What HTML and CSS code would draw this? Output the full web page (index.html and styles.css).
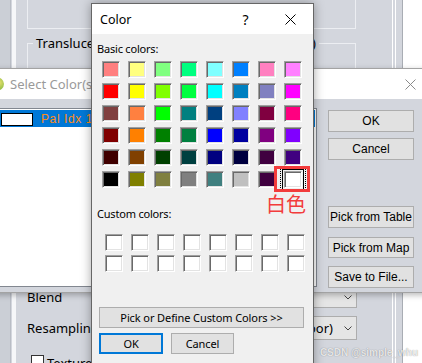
FILE: index.html
```html
<!DOCTYPE html>
<html>
<head>
<meta charset="utf-8">
<link rel="stylesheet" href="styles.css">
</head>
<body>
<div class="bgwin">
  <div class="bg-left"></div>
  <div class="bg-rail"></div>
  <div class="bg-main">
    <div class="gb1"></div>
    <div class="gb2">
      <div class="legend"><span>Translucency of the selected color</span><span>e)</span></div>
    </div>
    <div class="bg-bottom">
      <div class="row row-blend">
        <span class="lbl">Blend</span>
        <div class="combo"><span class="chev"><svg width="8" height="5" viewBox="0 0 8 5"><polyline points="0.5,0.5 4,4 7.5,0.5" fill="none" stroke="#444" stroke-width="1"/></svg></span></div>
      </div>
      <div class="row row-res">
        <span class="lbl">Resampling</span>
        <div class="combo"><span class="ctext">Nearest Neighboor)</span><span class="chev"><svg width="8" height="5" viewBox="0 0 8 5"><polyline points="0.5,0.5 4,4 7.5,0.5" fill="none" stroke="#444" stroke-width="1"/></svg></span></div>
      </div>
      <div class="row row-chk">
        <span class="chk"></span><span class="lbl">Texture Mode</span>
      </div>
    </div>
  </div>
  <div class="bg-right">
    <div class="rail2"></div>
    <div class="gap2"></div>
    <div class="edge"></div>
  </div>
</div>

<div class="selwin">
  <div class="sel-title">
    <span class="appicon"></span>
    <span class="sel-caption">Select Color(s)</span>
    <span class="sel-close"><svg width="11" height="11" viewBox="0 0 11 11"><path d="M0.5 0.5 L10.5 10.5 M10.5 0.5 L0.5 10.5" stroke="#8a8a8a" stroke-width="1"/></svg></span>
  </div>
  <div class="sel-body">
    <div class="list">
      <div class="list-row"><span class="lswatch"></span><span class="ltext">Pal Idx 1 - White</span></div>
    </div>
    <div class="sel-buttons">
      <div class="wbtn b-ok">OK</div>
      <div class="wbtn b-cancel">Cancel</div>
      <div class="wbtn b-table">Pick from Table</div>
      <div class="wbtn b-map">Pick from Map</div>
      <div class="wbtn b-save">Save to File...</div>
    </div>
  </div>
</div>

<div class="colorwin">
  <div class="cw-title">
    <span class="cw-caption">Color</span>
    <span class="cw-help">?</span>
    <span class="cw-close"><svg width="11" height="11" viewBox="0 0 11 11"><path d="M0.5 0.5 L10.5 10.5 M10.5 0.5 L0.5 10.5" stroke="#000" stroke-width="1"/></svg></span>
  </div>
  <div class="cw-body">
    <div class="cw-label lbl-basic">Basic colors:</div>
    <div class="grid basic">
      <div class="cell" style="background:#ff8080"></div>
      <div class="cell" style="background:#ffff80"></div>
      <div class="cell" style="background:#80ff80"></div>
      <div class="cell" style="background:#00ff80"></div>
      <div class="cell" style="background:#80ffff"></div>
      <div class="cell" style="background:#0080ff"></div>
      <div class="cell" style="background:#ff80c0"></div>
      <div class="cell" style="background:#ff80ff"></div>

      <div class="cell" style="background:#ff0000"></div>
      <div class="cell" style="background:#ffff00"></div>
      <div class="cell" style="background:#80ff00"></div>
      <div class="cell" style="background:#00ff40"></div>
      <div class="cell" style="background:#00ffff"></div>
      <div class="cell" style="background:#0080c0"></div>
      <div class="cell" style="background:#8080c0"></div>
      <div class="cell" style="background:#ff00ff"></div>

      <div class="cell" style="background:#804040"></div>
      <div class="cell" style="background:#ff8040"></div>
      <div class="cell" style="background:#00ff00"></div>
      <div class="cell" style="background:#008080"></div>
      <div class="cell" style="background:#004080"></div>
      <div class="cell" style="background:#8080ff"></div>
      <div class="cell" style="background:#800040"></div>
      <div class="cell" style="background:#ff0080"></div>

      <div class="cell" style="background:#800000"></div>
      <div class="cell" style="background:#ff8000"></div>
      <div class="cell" style="background:#008000"></div>
      <div class="cell" style="background:#008040"></div>
      <div class="cell" style="background:#0000ff"></div>
      <div class="cell" style="background:#0000a0"></div>
      <div class="cell" style="background:#800080"></div>
      <div class="cell" style="background:#8000ff"></div>

      <div class="cell" style="background:#400000"></div>
      <div class="cell" style="background:#804000"></div>
      <div class="cell" style="background:#004000"></div>
      <div class="cell" style="background:#004040"></div>
      <div class="cell" style="background:#000080"></div>
      <div class="cell" style="background:#000040"></div>
      <div class="cell" style="background:#400040"></div>
      <div class="cell" style="background:#400080"></div>

      <div class="cell" style="background:#000000"></div>
      <div class="cell" style="background:#808000"></div>
      <div class="cell" style="background:#808040"></div>
      <div class="cell" style="background:#808080"></div>
      <div class="cell" style="background:#408080"></div>
      <div class="cell" style="background:#c0c0c0"></div>
      <div class="cell" style="background:#400040"></div>
      <div class="cell sel" style="background:#ffffff"></div>
    </div>
    <div class="cw-label lbl-custom">Custom colors:</div>
    <div class="grid custom">
      <div class="cell"></div><div class="cell"></div><div class="cell"></div><div class="cell"></div>
      <div class="cell"></div><div class="cell"></div><div class="cell"></div><div class="cell"></div>
      <div class="cell"></div><div class="cell"></div><div class="cell"></div><div class="cell"></div>
      <div class="cell"></div><div class="cell"></div><div class="cell"></div><div class="cell"></div>
    </div>
    <div class="cbtn btn-define">Pick or Define Custom Colors &gt;&gt;</div>
    <div class="btn-row">
      <div class="cbtn btn-ok">OK</div>
      <div class="cbtn btn-cancel">Cancel</div>
    </div>
  </div>
  <div class="mark-box"></div>
  <div class="mark-text">白色</div>
</div>

<div class="watermark">CSDN @simple_whu</div>
</body>
</html>
```

FILE: styles.css
```css
* { box-sizing: border-box; margin: 0; padding: 0; }
html, body { width: 422px; height: 363px; overflow: hidden; }
body {
  position: relative;
  background: #d3d6dd;
  font-family: "Noto Sans", "Open Sans", sans-serif;
  color: #000;
}

/* ---------- background window ---------- */
.bgwin { display: flex; height: 363px; overflow: hidden; }
.bg-left { width: 11px; background: #cbcfd6; border-right: 1px solid #b9bdc5; }
.bg-rail { width: 5px; border-left: 1px solid #d3d6dd; background: #f6f7f9; }
.bg-main { flex: 1; padding-left: 11px; display: flex; flex-direction: column; overflow: hidden; }
.bg-main > * { flex-shrink: 0; }
.gb1 { height: 29px; margin-right: 36px; border: 1px solid #eceef2; border-top: none; }
.gb2 { height: 40px; margin-top: 14px; margin-right: 36px; border: 1px solid #eceef2; border-bottom: none; }
.legend {
  display: flex; justify-content: space-between;
  width: 286px; margin: -9px 0 0 5px; padding: 0 3px;
  background: #d3d6dd; font-size: 13px; line-height: 16px;
  white-space: nowrap; overflow: hidden;
}
.bg-bottom { margin-top: 203px; margin-right: 35px; display: flex; flex-direction: column; }
.bg-bottom > * { flex-shrink: 0; }
.row { display: flex; align-items: center; justify-content: space-between; }
.lbl { font-size: 13px; line-height: 16px; white-space: nowrap; }
.row-blend { height: 22px; }
.row-res { height: 24px; margin-top: 8px; }
.row-chk { height: 14px; margin-top: 15px; justify-content: flex-start; align-items: flex-start; padding-left: 4px; }
.combo {
  width: 180px; height: 100%;
  background: #e5e5e5; border: 1px solid #adadad;
  display: flex; align-items: center; justify-content: flex-end;
  padding-right: 4px;
}
.ctext { font-size: 13px; line-height: 16px; margin-right: 11px; white-space: nowrap; }
.chev { display: flex; width: 8px; height: 5px; }
.chev svg { display: block; }
.chk { width: 13px; height: 13px; border: 1px solid #333; background: #fff; margin-right: 3px; flex-shrink: 0; }

.bg-right { width: 30px; display: flex; }
.rail2 { width: 4px; border-left: 1px solid #fff; border-right: 1px solid #fff; }
.gap2 { width: 6px; }
.edge { flex: 1; border-left: 1px solid #a9adb4; background: #fff; }

/* ---------- Select Color(s) window ---------- */
.selwin {
  position: absolute; left: -22px; top: 68px;
  width: 460px; height: 225px;
  background: #d3d6dd;
  border: 1px solid #a3a3a3;
  box-shadow: 0 2px 6px rgba(0,0,0,0.28);
  display: flex; flex-direction: column;
}
.sel-title {
  height: 30px; background: #fff;
  display: flex; align-items: center; padding-left: 9px;
}
.appicon {
  width: 16px; height: 14px; border-radius: 50%;
  background: radial-gradient(circle at 70% 40%, #e8e070 0, #9bc24a 45%, #4f8a3a 100%);
}
.sel-caption { margin-left: 6px; font-size: 13px; color: #9a9a9a; white-space: nowrap; }
.sel-close { margin-left: auto; margin-right: 4px; width: 46px; display: flex; justify-content: center; }
.sel-close svg { display: block; }

.sel-body { flex: 1; display: flex; padding: 9px 0 0 11px; }
.list {
  width: 327px; height: 179px;
  background: #fff; border: 1px solid #828790; padding: 1px;
}
.list-row {
  height: 17px; background: #0078d7;
  display: flex; align-items: center;
}
.lswatch { width: 32px; height: 13px; margin-left: 9px; margin-top: 2px; background: #fff; border: 1px solid #000; }
.ltext {
  margin-left: 8px; color: #ff8c1a;
  font-family: "Liberation Sans Narrow", "Liberation Sans", sans-serif;
  font-size: 12px; letter-spacing: 0.6px; white-space: nowrap;
}
.sel-buttons { margin-left: 11px; width: 86px; display: flex; flex-direction: column; }
.wbtn {
  height: 22px; background: #e1e1e1; border: 1px solid #adadad;
  display: flex; align-items: center; justify-content: center;
  font-family: "Liberation Sans Narrow", "Liberation Sans", sans-serif;
  font-size: 12px; white-space: nowrap;
}
.b-ok { margin-top: 2px; }
.b-cancel { margin-top: 6px; }
.b-table { margin-top: 46px; }
.b-map { margin-top: 9px; height: 21px; }
.b-save { margin-top: 8px; }

/* ---------- Color dialog ---------- */
.colorwin {
  position: absolute; left: 91px; top: 3px;
  width: 223px; height: 372px;
  border: 1px solid #666;
  background: #f0f0f0;
  box-shadow: 0 0 10px rgba(0,0,0,0.35);
  display: flex; flex-direction: column;
}
.cw-title { height: 30px; background: #fff; display: flex; align-items: center; padding-left: 8px; }
.cw-caption { font-size: 12.5px; }
.cw-help { margin-left: auto; width: 45px; text-align: center; font-size: 14px; }
.cw-close { width: 45px; display: flex; justify-content: center; }
.cw-close svg { display: block; }

.cw-body { display: flex; flex-direction: column; }
.cw-label { font-size: 11px; line-height: 15px; letter-spacing: -0.2px; height: 15px; margin-left: 5px; }
.lbl-basic { margin-top: 7px; }
.lbl-custom { margin-top: 18px; }
.grid { display: grid; grid-template-columns: repeat(8, 18px); column-gap: 8px; }
.basic { margin: 5px 0 0 10px; grid-auto-rows: 17px; row-gap: 5px; }
.custom { margin: 13px 0 0 13px; grid-auto-rows: 17px; row-gap: 4px; }
.cell {
  position: relative;
  background: #fff;
  border: 1px solid; border-color: #a0a0a0 #fff #fff #a0a0a0;
  box-shadow: inset 1px 1px 0 #696969, inset -1px -1px 0 #e3e3e3;
}
.cell.sel {
  box-shadow: inset 1px 1px 0 #696969, inset -1px -1px 0 #e3e3e3, 0 0 0 1px #f0f0f0, 0 0 0 2px #000;
}
.cell.sel::after {
  content: ""; position: absolute;
  left: -5px; right: -5px; top: -3px; bottom: -3px;
  border-left: 1px dotted #000; border-right: 1px dotted #000;
}
.cbtn {
  height: 21px; background: #e1e1e1; border: 1px solid #adadad;
  display: flex; align-items: center; justify-content: center;
  font-size: 11px; letter-spacing: -0.1px; white-space: nowrap;
}
.btn-define { margin: 35px 0 0 7px; width: 205px; }
.btn-row { display: flex; gap: 8px; margin: 5px 0 0 7px; }
.btn-ok { width: 64px; border: 2px solid #0078d7; }
.btn-cancel { width: 63px; }

.mark-box {
  position: absolute; left: 182px; top: 162px;
  width: 36px; height: 26px; border: 3px solid #f23c3c;
}
.mark-text {
  position: absolute; left: 174px; top: 190px;
  font-family: "Noto Sans CJK SC", sans-serif;
  font-size: 20px; line-height: 20px; color: #f23c3c;
}

.watermark {
  position: absolute; right: 4px; bottom: 5px;
  font-family: "Liberation Sans", sans-serif; font-size: 10px; font-weight: bold;
  color: rgba(255,255,255,0.8);
  text-shadow: 0 0 1px rgba(0,0,0,0.45);
}
```
